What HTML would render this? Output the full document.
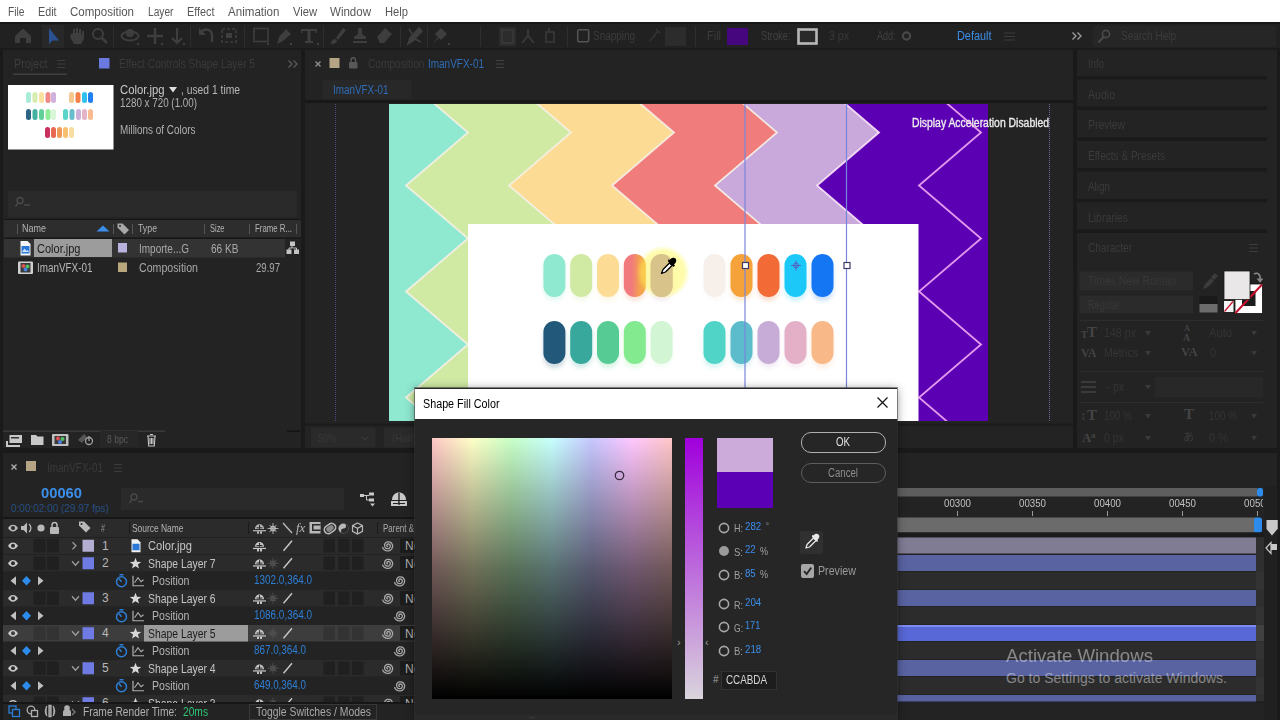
<!DOCTYPE html>
<html lang="en">
<head>
<meta charset="utf-8">
<title>Adobe After Effects - Shape Fill Color</title>
<style>
*{box-sizing:border-box;margin:0;padding:0}
html,body{width:1280px;height:720px;overflow:hidden;background:#1a1a1a}
body{position:relative;font-family:"Liberation Sans",sans-serif;font-size:12px;color:#bdbdbd}
.abs{position:absolute}
.t{position:absolute;white-space:nowrap}
svg{overflow:visible}
</style>
</head>
<body>
<div class="abs" style="left:0px;top:0px;width:1280px;height:22px;background:#ffffff;"></div>
<div class="t" style="left:7.5px;top:4.8px;font-size:12px;line-height:14px;color:#585858;transform:scaleX(0.853);transform-origin:0 50%;">File</div>
<div class="t" style="left:37.5px;top:4.8px;font-size:12px;line-height:14px;color:#585858;transform:scaleX(0.895);transform-origin:0 50%;">Edit</div>
<div class="t" style="left:70px;top:4.8px;font-size:12px;line-height:14px;color:#585858;transform:scaleX(0.960);transform-origin:0 50%;">Composition</div>
<div class="t" style="left:147.5px;top:4.8px;font-size:12px;line-height:14px;color:#585858;transform:scaleX(0.850);transform-origin:0 50%;">Layer</div>
<div class="t" style="left:187px;top:4.8px;font-size:12px;line-height:14px;color:#585858;transform:scaleX(0.903);transform-origin:0 50%;">Effect</div>
<div class="t" style="left:228px;top:4.8px;font-size:12px;line-height:14px;color:#585858;transform:scaleX(0.965);transform-origin:0 50%;">Animation</div>
<div class="t" style="left:293px;top:4.8px;font-size:12px;line-height:14px;color:#585858;transform:scaleX(0.930);transform-origin:0 50%;">View</div>
<div class="t" style="left:330px;top:4.8px;font-size:12px;line-height:14px;color:#585858;transform:scaleX(0.961);transform-origin:0 50%;">Window</div>
<div class="t" style="left:384.5px;top:4.8px;font-size:12px;line-height:14px;color:#585858;transform:scaleX(0.932);transform-origin:0 50%;">Help</div>
<div class="abs" style="left:0px;top:22px;width:1280px;height:26px;background:#212121;"></div>
<div class="abs" style="left:0px;top:22px;width:1280px;height:1.5px;background:#171717;"></div>
<div class="abs" style="left:3px;top:50px;width:298px;height:398px;background:#232323;"></div>
<div class="abs" style="left:305px;top:50px;width:768px;height:398px;background:#232323;"></div>
<div class="abs" style="left:1077px;top:50px;width:200px;height:398px;background:#232323;"></div>
<div class="abs" style="left:3px;top:453px;width:1274px;height:267px;background:#232323;"></div>
<svg class="abs" style="left:389px;top:104px;" width="599" height="317" viewBox="389 104 599 317"><defs><clipPath id="cc"><rect x="389" y="104" width="599" height="317"/></clipPath></defs><g clip-path="url(#cc)"><rect x="389" y="104" width="599" height="317" fill="#8fe8d0"/><polygon points="468,26.5 406,79.5 468,132.5 406,185.5 468,238.5 406,291.5 468,344.5 406,397.5 468,450.5 571,450.5 509,397.5 571,344.5 509,291.5 571,238.5 509,185.5 571,132.5 509,79.5 571,26.5" fill="#d0eaa4"/><polygon points="571,26.5 509,79.5 571,132.5 509,185.5 571,238.5 509,291.5 571,344.5 509,397.5 571,450.5 674,450.5 612,397.5 674,344.5 612,291.5 674,238.5 612,185.5 674,132.5 612,79.5 674,26.5" fill="#fcdc94"/><polygon points="674,26.5 612,79.5 674,132.5 612,185.5 674,238.5 612,291.5 674,344.5 612,397.5 674,450.5 777,450.5 715,397.5 777,344.5 715,291.5 777,238.5 715,185.5 777,132.5 715,79.5 777,26.5" fill="#f07c7c"/><polygon points="777,26.5 715,79.5 777,132.5 715,185.5 777,238.5 715,291.5 777,344.5 715,397.5 777,450.5 879,450.5 817,397.5 879,344.5 817,291.5 879,238.5 817,185.5 879,132.5 817,79.5 879,26.5" fill="#c9a8dc"/><polygon points="879,26.5 817,79.5 879,132.5 817,185.5 879,238.5 817,291.5 879,344.5 817,397.5 879,450.5 981,450.5 919,397.5 981,344.5 919,291.5 981,238.5 919,185.5 981,132.5 919,79.5 981,26.5" fill="#5c00b4"/><polygon points="981,26.5 919,79.5 981,132.5 919,185.5 981,238.5 919,291.5 981,344.5 919,397.5 981,450.5 1084,450.5 1022,397.5 1084,344.5 1022,291.5 1084,238.5 1022,185.5 1084,132.5 1022,79.5 1084,26.5" fill="#5c00b4"/><polyline points="468,26.5 406,79.5 468,132.5 406,185.5 468,238.5 406,291.5 468,344.5 406,397.5 468,450.5" fill="none" stroke="#f6efe6" stroke-width="1.8" stroke-opacity="0.9"/><polyline points="571,26.5 509,79.5 571,132.5 509,185.5 571,238.5 509,291.5 571,344.5 509,397.5 571,450.5" fill="none" stroke="#f6efe6" stroke-width="1.8" stroke-opacity="0.9"/><polyline points="674,26.5 612,79.5 674,132.5 612,185.5 674,238.5 612,291.5 674,344.5 612,397.5 674,450.5" fill="none" stroke="#f6efe6" stroke-width="1.8" stroke-opacity="0.9"/><polyline points="777,26.5 715,79.5 777,132.5 715,185.5 777,238.5 715,291.5 777,344.5 715,397.5 777,450.5" fill="none" stroke="#f6efe6" stroke-width="1.8" stroke-opacity="0.9"/><polyline points="879,26.5 817,79.5 879,132.5 817,185.5 879,238.5 817,291.5 879,344.5 817,397.5 879,450.5" fill="none" stroke="#fbe4f6" stroke-width="1.8" stroke-opacity="0.9"/><polyline points="981,26.5 919,79.5 981,132.5 919,185.5 981,238.5 919,291.5 981,344.5 919,397.5 981,450.5" fill="none" stroke="#f3a6f3" stroke-width="1.8" stroke-opacity="0.9"/><rect x="468" y="224" width="450.5" height="254" fill="#ffffff"/><defs><filter id="ps" x="-30%" y="-20%" width="160%" height="150%"><feGaussianBlur stdDeviation="2"/></filter><linearGradient id="p4" x1="0" x2="1" y1="0" y2="0"><stop offset="0.35" stop-color="#f07a7c"/><stop offset="0.75" stop-color="#f5a24e"/></linearGradient></defs><rect x="543.4" y="258" width="22" height="43" rx="11" fill="#8fe8d0" opacity="0.22" filter="url(#ps)"/><rect x="543.4" y="254" width="22" height="43" rx="11" fill="#8fe8d0"/><rect x="570.2" y="258" width="22" height="43" rx="11" fill="#d0eaa4" opacity="0.22" filter="url(#ps)"/><rect x="570.2" y="254" width="22" height="43" rx="11" fill="#d0eaa4"/><rect x="597.0" y="258" width="22" height="43" rx="11" fill="#fcdc94" opacity="0.22" filter="url(#ps)"/><rect x="597.0" y="254" width="22" height="43" rx="11" fill="#fcdc94"/><rect x="623.8" y="258" width="22" height="43" rx="11" fill="#f08a60" opacity="0.22" filter="url(#ps)"/><rect x="623.8" y="254" width="22" height="43" rx="11" fill="url(#p4)"/><rect x="650.6" y="258" width="22" height="43" rx="11" fill="#ccabda" opacity="0.22" filter="url(#ps)"/><rect x="650.6" y="254" width="22" height="43" rx="11" fill="#ccabda"/><rect x="703.5" y="258" width="22" height="43" rx="11" fill="#f7efea" opacity="0.22" filter="url(#ps)"/><rect x="703.5" y="254" width="22" height="43" rx="11" fill="#f7efea"/><rect x="730.5" y="258" width="22" height="43" rx="11" fill="#f5a23a" opacity="0.22" filter="url(#ps)"/><rect x="730.5" y="254" width="22" height="43" rx="11" fill="#f5a23a"/><rect x="757.5" y="258" width="22" height="43" rx="11" fill="#f26a36" opacity="0.22" filter="url(#ps)"/><rect x="757.5" y="254" width="22" height="43" rx="11" fill="#f26a36"/><rect x="784.5" y="258" width="22" height="43" rx="11" fill="#1cc8f8" opacity="0.22" filter="url(#ps)"/><rect x="784.5" y="254" width="22" height="43" rx="11" fill="#1cc8f8"/><rect x="811.5" y="258" width="22" height="43" rx="11" fill="#1476f2" opacity="0.22" filter="url(#ps)"/><rect x="811.5" y="254" width="22" height="43" rx="11" fill="#1476f2"/><rect x="543.4" y="325" width="22" height="43" rx="11" fill="#22587a" opacity="0.22" filter="url(#ps)"/><rect x="543.4" y="321" width="22" height="43" rx="11" fill="#22587a"/><rect x="570.2" y="325" width="22" height="43" rx="11" fill="#38a89c" opacity="0.22" filter="url(#ps)"/><rect x="570.2" y="321" width="22" height="43" rx="11" fill="#38a89c"/><rect x="597.0" y="325" width="22" height="43" rx="11" fill="#56cc94" opacity="0.22" filter="url(#ps)"/><rect x="597.0" y="321" width="22" height="43" rx="11" fill="#56cc94"/><rect x="623.8" y="325" width="22" height="43" rx="11" fill="#84ea90" opacity="0.22" filter="url(#ps)"/><rect x="623.8" y="321" width="22" height="43" rx="11" fill="#84ea90"/><rect x="650.6" y="325" width="22" height="43" rx="11" fill="#d2f6d4" opacity="0.22" filter="url(#ps)"/><rect x="650.6" y="321" width="22" height="43" rx="11" fill="#d2f6d4"/><rect x="703.5" y="325" width="22" height="43" rx="11" fill="#50d4c8" opacity="0.22" filter="url(#ps)"/><rect x="703.5" y="321" width="22" height="43" rx="11" fill="#50d4c8"/><rect x="730.5" y="325" width="22" height="43" rx="11" fill="#5cbccc" opacity="0.22" filter="url(#ps)"/><rect x="730.5" y="321" width="22" height="43" rx="11" fill="#5cbccc"/><rect x="757.5" y="325" width="22" height="43" rx="11" fill="#c8acd8" opacity="0.22" filter="url(#ps)"/><rect x="757.5" y="321" width="22" height="43" rx="11" fill="#c8acd8"/><rect x="784.5" y="325" width="22" height="43" rx="11" fill="#e4b0c8" opacity="0.22" filter="url(#ps)"/><rect x="784.5" y="321" width="22" height="43" rx="11" fill="#e4b0c8"/><rect x="811.5" y="325" width="22" height="43" rx="11" fill="#f8b888" opacity="0.22" filter="url(#ps)"/><rect x="811.5" y="321" width="22" height="43" rx="11" fill="#f8b888"/><defs><radialGradient id="yg"><stop offset="0" stop-color="#fff84a" stop-opacity="0.5"/><stop offset="0.78" stop-color="#fff84a" stop-opacity="0.46"/><stop offset="1" stop-color="#fff84a" stop-opacity="0"/></radialGradient></defs><circle cx="663" cy="272.5" r="27" fill="url(#yg)"/><rect x="650.6" y="254" width="22" height="43" rx="11" fill="#d8c48a"/><line x1="745" y1="104" x2="745" y2="421" stroke="#7886dc" stroke-width="1.2"/><line x1="846.5" y1="104" x2="846.5" y2="421" stroke="#7886dc" stroke-width="1.2"/><rect x="742.5" y="262.5" width="6" height="6" fill="#ffffff" stroke="#3c3c6a" stroke-width="1.2"/><rect x="844" y="262.5" width="6" height="6" fill="#ffffff" stroke="#3c3c6a" stroke-width="1.2"/><g stroke="#5560c0" stroke-width="1" fill="none"><circle cx="796" cy="265.5" r="2.5"/><path d="M796 260.5v10M791 265.5h10"/></g><g transform="translate(661,274) rotate(0)"><path d="M0.5 -0.5 L2 -4.5 L8.5 -11 L11 -8.5 L4.5 -2 Z" fill="#fff" stroke="#000" stroke-width="1.3" stroke-linejoin="round"/><path d="M7 -12.5 L12.5 -7 L14 -8.5 L13 -9.5 C16 -12 15.5 -14.5 14.5 -15.5 C13.5 -16.5 11 -17 8.5 -14 L7.5 -15 Z" fill="#000"/></g></g></svg>
<div class="t" style="left:912px;top:115.8px;font-size:12px;line-height:14px;color:#ececec;transform:scaleX(0.867);transform-origin:0 50%;-webkit-text-stroke:0.35px #ececec;">Display Acceleration Disabled</div>
<div class="abs" style="left:335px;top:104px;width:0;height:317px;border-left:1px dotted #4a4a80"></div>
<div class="abs" style="left:1049px;top:104px;width:0;height:317px;border-left:1px dotted #6a6aa0"></div>
<svg class="abs" style="left:0px;top:1.4px;" width="1280" height="50" viewBox="0 0 1280 50"><rect x="42" y="24" width="22" height="23" fill="#282828"/><path d="M15 35L23 27.5L31 35V42H26V37H20V42H15Z" fill="#3e3e3e"/><path d="M49 27V43L52.5 39.5L59 39.5Z" fill="#2a5290"/><path d="M71 33L73 32V28H75V32H76V27H78V32H79V28H81V33H82V30H84V38L81 43H74L70 36Z" fill="#3e3e3e"/><circle cx="98" cy="33" r="5" fill="none" stroke="#3e3e3e" stroke-width="2"/><path d="M102 37L107 42" stroke="#3e3e3e" stroke-width="2.5"/><ellipse cx="130" cy="35" rx="8.5" ry="4.5" fill="none" stroke="#3e3e3e" stroke-width="2"/><circle cx="130" cy="32" r="4" fill="#3e3e3e"/><rect x="137" y="42" width="2" height="2" fill="#3e3e3e"/><path d="M155 27V43M147 35H163" stroke="#3e3e3e" stroke-width="2.4"/><rect x="161" y="42" width="2" height="2" fill="#3e3e3e"/><path d="M177 27V41M172 37L177 42L182 37" stroke="#3e3e3e" stroke-width="2.2" fill="none"/><rect x="183" y="42" width="2" height="2" fill="#3e3e3e"/><path d="M200 32C204 27 212 27 212 35V41" stroke="#3e3e3e" stroke-width="2.4" fill="none"/><path d="M199 27V34H206Z" fill="#3e3e3e"/><rect x="222" y="28" width="14" height="13" fill="none" stroke="#3e3e3e" stroke-width="1.6" stroke-dasharray="3 2"/><rect x="226" y="32" width="6" height="5" fill="#3e3e3e"/><rect x="254" y="27.5" width="14" height="13" fill="none" stroke="#3e3e3e" stroke-width="1.6"/><rect x="267" y="42" width="2" height="2" fill="#3e3e3e"/><path d="M277 43L279 36L286 28L291 33L283 40Z" fill="#3e3e3e"/><rect x="290" y="42" width="2" height="2" fill="#3e3e3e"/><path d="M301 28H317V32H315.5V30H310.5V40H313V42H305V40H307.5V30H302.5V32H301Z" fill="#3e3e3e"/><rect x="317" y="42" width="2" height="2" fill="#3e3e3e"/><path d="M331 43C331 40 333 38 335 38L337 40C337 42 334 43 331 43Z M336 37L343 27L346 29L338 39Z" fill="#3e3e3e"/><path d="M358 27H362V33L366 36V38H354V36L358 33Z M353 40H367V42H353Z" fill="#3e3e3e"/><path d="M377 36L385 27L392 33L384 42H380Z" fill="#3e3e3e"/><path d="M408 43L410 37L419 27L422 30L413 40Z M409 28L412 33M415 38L421 41" stroke="#3e3e3e" stroke-width="1.6" fill="#3e3e3e"/><path d="M433 42L438 36L435 33L441 27L447 33L441 39L439 37Z" fill="#3e3e3e"/><rect x="448" y="42" width="2" height="2" fill="#3e3e3e"/><rect x="113" y="25" width="1" height="21" fill="#2e2e2e"/><rect x="190" y="25" width="1" height="21" fill="#2e2e2e"/><rect x="244" y="25" width="1" height="21" fill="#2e2e2e"/><rect x="323" y="25" width="1" height="21" fill="#2e2e2e"/><rect x="400" y="25" width="1" height="21" fill="#2e2e2e"/><rect x="427" y="25" width="1" height="21" fill="#2e2e2e"/><rect x="480" y="25" width="1" height="21" fill="#2e2e2e"/><rect x="567" y="25" width="1" height="21" fill="#2e2e2e"/><rect x="695" y="25" width="1" height="21" fill="#2e2e2e"/><rect x="499" y="26" width="17" height="19" fill="#2c2c2c"/><rect x="502" y="29" width="11" height="13" fill="none" stroke="#3a3a3a" stroke-width="1.5"/><path d="M528 28V35M522 42L528 35L534 42" stroke="#3a3a3a" stroke-width="1.8" fill="none"/><path d="M546 31H554V41H546ZM549 27V31" stroke="#3a3a3a" stroke-width="1.6" fill="none"/><rect x="577.7" y="28.7" width="11" height="12" rx="1.5" fill="none" stroke="#555" stroke-width="1.5"/><path d="M650 40L658 30M656 28L660 32" stroke="#343434" stroke-width="1.6"/><rect x="665" y="26" width="21" height="19" fill="#2c2c2c"/><rect x="727" y="27" width="21" height="17" fill="#45067e"/><rect x="798.5" y="28.5" width="18" height="14" fill="#2a2a2a" stroke="#b8b8b8" stroke-width="2.6"/><circle cx="906.5" cy="35" r="3.6" fill="none" stroke="#484848" stroke-width="2.2"/><path d="M1004 32H1015M1004 35.5H1015M1004 39H1015" stroke="#3c3c3c" stroke-width="1"/><path d="M1072.5 31.5L1076 35L1072.5 38.5M1077.5 31.5L1081 35L1077.5 38.5" stroke="#9a9a9a" stroke-width="1.4" fill="none"/><rect x="1093" y="25" width="183" height="21" rx="2" fill="#262626"/><circle cx="1106" cy="33" r="3.6" fill="none" stroke="#4a4a4a" stroke-width="1.6"/><path d="M1103.5 36L1098.5 41.5" stroke="#4a4a4a" stroke-width="2"/></svg>
<div class="t" style="left:593px;top:29.3px;font-size:12px;line-height:14px;color:#3c3c3c;transform:scaleX(0.828);transform-origin:0 50%;">Snapping</div>
<div class="t" style="left:707px;top:29.3px;font-size:12px;line-height:14px;color:#3c3c3c;transform:scaleX(0.913);transform-origin:0 50%;">Fill</div>
<div class="t" style="left:761px;top:29.3px;font-size:12px;line-height:14px;color:#424242;transform:scaleX(0.776);transform-origin:0 50%;">Stroke:</div>
<div class="t" style="left:829px;top:29.3px;font-size:12px;line-height:14px;color:#383838;transform:scaleX(0.882);transform-origin:0 50%;">3 px</div>
<div class="t" style="left:877px;top:29.3px;font-size:12px;line-height:14px;color:#404040;transform:scaleX(0.749);transform-origin:0 50%;">Add:</div>
<div class="t" style="left:957px;top:29.3px;font-size:12px;line-height:14px;color:#3b8eea;transform:scaleX(0.907);transform-origin:0 50%;">Default</div>
<div class="t" style="left:1121px;top:29.3px;font-size:12px;line-height:14px;color:#3c3c3c;transform:scaleX(0.833);transform-origin:0 50%;">Search Help</div>
<div class="t" style="left:14px;top:57.0px;font-size:12px;line-height:14px;color:#3c3c3c;transform:scaleX(0.897);transform-origin:0 50%;">Project</div>
<svg class="abs" style="left:0px;top:0px;" width="302" height="450" viewBox="0 0 302 450"><path d="M57 60.5H65M57 64H65M57 67.5H65" stroke="#3c3c3c" stroke-width="1"/><rect x="13" y="73.5" width="54" height="1.5" fill="#404040"/><rect x="99" y="58" width="10.5" height="10.5" fill="#6b7ae0"/><path d="M288.5 60.5L292 64L288.5 67.5M293.5 60.5L297 64L293.5 67.5" stroke="#5a5a5a" stroke-width="1.3" fill="none"/><rect x="8" y="85" width="105.5" height="64.5" fill="#ffffff"/><rect x="26" y="92" width="5" height="11" rx="2.5" fill="#a8ecd8"/><rect x="32.5" y="92" width="5" height="11" rx="2.5" fill="#d6ecb0"/><rect x="39" y="92" width="5" height="11" rx="2.5" fill="#fbe0a0"/><rect x="45.5" y="92" width="5" height="11" rx="2.5" fill="#f08888"/><rect x="51" y="92" width="5" height="11" rx="2.5" fill="#d0b0dc"/><rect x="69" y="92" width="5" height="11" rx="2.5" fill="#f6c890"/><rect x="75.5" y="92" width="5" height="11" rx="2.5" fill="#f28048"/><rect x="82" y="92" width="5" height="11" rx="2.5" fill="#30c0f0"/><rect x="88" y="92" width="5" height="11" rx="2.5" fill="#2080f0"/><rect x="26" y="109" width="5" height="11" rx="2.5" fill="#2c6484"/><rect x="32.5" y="109" width="5" height="11" rx="2.5" fill="#44b0a0"/><rect x="39" y="109" width="5" height="11" rx="2.5" fill="#60d098"/><rect x="45.5" y="109" width="5" height="11" rx="2.5" fill="#90ec98"/><rect x="51" y="109" width="5" height="11" rx="2.5" fill="#d8f6d8"/><rect x="63" y="109" width="5" height="11" rx="2.5" fill="#58d4c8"/><rect x="69.5" y="109" width="5" height="11" rx="2.5" fill="#68bccc"/><rect x="76" y="109" width="5" height="11" rx="2.5" fill="#ccb0d8"/><rect x="82" y="109" width="5" height="11" rx="2.5" fill="#e4b4c8"/><rect x="88" y="109" width="5" height="11" rx="2.5" fill="#f8bc90"/><rect x="45" y="127" width="5" height="11" rx="2.5" fill="#c83060"/><rect x="51" y="127" width="5" height="11" rx="2.5" fill="#e86850"/><rect x="57" y="127" width="5" height="11" rx="2.5" fill="#f09858"/><rect x="63" y="127" width="5" height="11" rx="2.5" fill="#f6c070"/><rect x="69" y="127" width="5" height="11" rx="2.5" fill="#f8dca0"/><rect x="8" y="191" width="289" height="26" fill="#2a2a2a"/><circle cx="20" cy="200.5" r="3" fill="none" stroke="#4a4a4a" stroke-width="1.4"/><path d="M18 203L15.5 206.5M24 205H30" stroke="#4a4a4a" stroke-width="1.4"/><rect x="4" y="219" width="297" height="1" fill="#151515"/><rect x="4" y="220" width="297" height="17.5" fill="#2d2d2d"/><rect x="4" y="237.5" width="297" height="1.5" fill="#181818"/><rect x="17" y="224" width="1" height="10" fill="#555"/><rect x="113" y="224" width="1" height="10" fill="#555"/><rect x="132" y="224" width="1" height="10" fill="#555"/><rect x="204" y="224" width="1" height="10" fill="#555"/><rect x="249" y="224" width="1" height="10" fill="#555"/><rect x="296" y="224" width="1" height="10" fill="#555"/><path d="M96.5 231.5L103 225.5L109.5 231.5Z" fill="#3b8eea"/><path d="M117.5 223.5H122.5L129 230L124.5 234.5L117.5 227.5Z" fill="#a8a8a8"/><circle cx="120" cy="226" r="1" fill="#2d2d2d"/><rect x="4" y="239" width="281" height="18.5" fill="#333333"/><rect x="34" y="239" width="78" height="18" fill="#9c9c9c"/><path d="M20.5 241H27.5L30.5 244V255.5H20.5Z" fill="#f4f4f4"/><rect x="21.5" y="246" width="8" height="7.5" fill="#2a78d8"/><path d="M22 252L24.5 248.5L26.5 251L27.5 250L29 252Z" fill="#cfe4ff"/><rect x="118" y="243" width="9" height="9.5" fill="#b8b2dc"/><g fill="#c4c4c4"><rect x="290" y="241.5" width="5" height="4.5"/><rect x="286.5" y="249.5" width="5" height="4.5"/><rect x="294" y="249.5" width="5" height="4.5"/><path d="M292 246V248H289V250M292.5 248H296.5V250" stroke="#c4c4c4" stroke-width="1" fill="none"/></g><rect x="18" y="261.5" width="15" height="12.5" rx="1" fill="#d0d0d0"/><rect x="20.5" y="263" width="10" height="9.5" fill="#3a3a3a"/><circle cx="23.5" cy="266" r="2" fill="#e05050"/><circle cx="27.5" cy="266.5" r="2" fill="#50c060"/><circle cx="25.5" cy="269.5" r="2" fill="#4a80e0"/><rect x="118" y="262.5" width="9" height="9.5" fill="#b8a67c"/><rect x="3" y="430.5" width="162" height="1.5" fill="#3a3a3a"/><rect x="287" y="430.5" width="13" height="1.5" fill="#141414"/><g fill="#c8c8c8"><path d="M6 441H8V445H20V447H6Z"/><rect x="9.5" y="435" width="12.5" height="8" /><rect x="11" y="437" width="8" height="1.5" fill="#333"/></g><path d="M31 435H36L37.5 436.5H43.5V445H31Z" fill="#c8c8c8"/><rect x="52" y="434" width="16.5" height="12" rx="1" fill="#c0c0c0"/><rect x="54.5" y="436" width="11.5" height="8" fill="#3a3a3a"/><circle cx="58" cy="438.5" r="2" fill="#e05050"/><circle cx="62.5" cy="439" r="2" fill="#50c060"/><circle cx="60" cy="442" r="2" fill="#4a80e0"/><path d="M78 440L84 434L87 437L82 443Z" fill="#555"/><circle cx="89" cy="441" r="3.5" fill="none" stroke="#a0a0a0" stroke-width="1.3"/><path d="M89 436V441" stroke="#a0a0a0" stroke-width="1.3"/><rect x="100" y="431" width="38" height="16" fill="#272727"/><path d="M147 436H156M148 436L148.7 446H154.3L155 436M150 434.5H153M150 438V444M151.5 438V444M153 438V444" stroke="#c4c4c4" stroke-width="1.1" fill="none"/></svg>
<div class="t" style="left:119px;top:57.0px;font-size:12px;line-height:14px;color:#3a3a3a;transform:scaleX(0.851);transform-origin:0 50%;">Effect Controls Shape Layer 5</div>
<div class="t" style="left:120px;top:82.5px;font-size:12px;line-height:14px;color:#c8c8c8;transform:scaleX(0.940);transform-origin:0 50%;">Color.jpg</div>
<svg class="abs" style="left:168px;top:86px;" width="10" height="7" viewBox="0 0 10 7"><path d="M1 1H9L5 6.5Z" fill="#e0e0e0"/></svg>
<div class="t" style="left:181px;top:82.5px;font-size:12px;line-height:14px;color:#b8b8b8;transform:scaleX(0.859);transform-origin:0 50%;">, used 1 time</div>
<div class="t" style="left:120px;top:96.0px;font-size:12px;line-height:14px;color:#b0b0b0;transform:scaleX(0.819);transform-origin:0 50%;">1280 x 720 (1.00)</div>
<div class="t" style="left:120px;top:122.5px;font-size:12px;line-height:14px;color:#b0b0b0;transform:scaleX(0.826);transform-origin:0 50%;">Millions of Colors</div>
<div class="t" style="left:22px;top:222.0px;font-size:11px;line-height:13px;color:#b4b4b4;transform:scaleX(0.818);transform-origin:0 50%;">Name</div>
<div class="t" style="left:138px;top:222.0px;font-size:11px;line-height:13px;color:#b4b4b4;transform:scaleX(0.797);transform-origin:0 50%;">Type</div>
<div class="t" style="left:210px;top:222.0px;font-size:11px;line-height:13px;color:#b4b4b4;transform:scaleX(0.678);transform-origin:0 50%;">Size</div>
<div class="t" style="left:255px;top:222.0px;font-size:11px;line-height:13px;color:#b4b4b4;transform:scaleX(0.712);transform-origin:0 50%;">Frame R...</div>
<div class="t" style="left:37px;top:241.5px;font-size:12px;line-height:14px;color:#1c1c1c;transform:scaleX(0.918);transform-origin:0 50%;">Color.jpg</div>
<div class="t" style="left:139px;top:241.5px;font-size:12px;line-height:14px;color:#a8a8a8;transform:scaleX(0.833);transform-origin:0 50%;">Importe...G</div>
<div class="t" style="left:211px;top:241.5px;font-size:12px;line-height:14px;color:#a8a8a8;transform:scaleX(0.841);transform-origin:0 50%;">66 KB</div>
<div class="t" style="left:37px;top:261.0px;font-size:12px;line-height:14px;color:#b8b8b8;transform:scaleX(0.824);transform-origin:0 50%;">ImanVFX-01</div>
<div class="t" style="left:139px;top:261.0px;font-size:12px;line-height:14px;color:#a8a8a8;transform:scaleX(0.885);transform-origin:0 50%;">Composition</div>
<div class="t" style="left:256px;top:260.5px;font-size:12px;line-height:14px;color:#a8a8a8;transform:scaleX(0.799);transform-origin:0 50%;">29.97</div>
<div class="t" style="left:107px;top:433.0px;font-size:11px;line-height:13px;color:#5a5a5a;transform:scaleX(0.780);transform-origin:0 50%;">8 bpc</div>
<svg class="abs" style="left:0px;top:0px;z-index:0" width="1280" height="450" viewBox="0 0 1280 450"><path d="M315.5 61.5L320.5 66.5M320.5 61.5L315.5 66.5" stroke="#909090" stroke-width="1.3"/><rect x="329.5" y="58" width="10" height="10" fill="#b5a584"/><rect x="349" y="62" width="8.5" height="6.5" rx="1" fill="#585858"/><path d="M351 62V60C351 57 355.5 57 355.5 60V62" fill="none" stroke="#585858" stroke-width="1.4"/><path d="M496 60.5H504M496 64H504M496 67.5H504" stroke="#444" stroke-width="1"/><rect x="322.5" y="80" width="89" height="19" fill="#282828"/><rect x="305" y="100" width="768" height="3" fill="#181818"/><rect x="305" y="423.5" width="768" height="2.5" fill="#1c1c1c"/><rect x="311" y="427.5" width="64.5" height="20" rx="1" fill="#2a2a2a"/><rect x="384" y="427.5" width="60" height="20" rx="1" fill="#2a2a2a"/><path d="M362 437L365 440L368 437" stroke="#3a3a3a" stroke-width="1.2" fill="none"/></svg>
<div class="t" style="left:367.5px;top:57.0px;font-size:12px;line-height:14px;color:#3a3a3a;transform:scaleX(0.847);transform-origin:0 50%;">Composition</div>
<div class="t" style="left:428px;top:57.0px;font-size:12px;line-height:14px;color:#2f6db8;transform:scaleX(0.831);transform-origin:0 50%;">ImanVFX-01</div>
<div class="t" style="left:332.5px;top:82.5px;font-size:12px;line-height:14px;color:#2f6db8;transform:scaleX(0.824);transform-origin:0 50%;">ImanVFX-01</div>
<div class="t" style="left:318px;top:431.5px;font-size:11px;line-height:13px;color:#383838;transform:scaleX(0.818);transform-origin:0 50%;">50%</div>
<div class="t" style="left:392px;top:431.5px;font-size:11px;line-height:13px;color:#383838;transform:scaleX(0.893);transform-origin:0 50%;">(Half)</div>
<svg class="abs" style="left:0px;top:0px;" width="1280" height="450" viewBox="0 0 1280 450"><rect x="1077" y="76" width="190" height="3.4" fill="#1a1a1a"/><rect x="1077" y="106.7" width="190" height="3.4" fill="#1a1a1a"/><rect x="1077" y="137.4" width="190" height="3.4" fill="#1a1a1a"/><rect x="1077" y="168.1" width="190" height="3.4" fill="#1a1a1a"/><rect x="1077" y="198.8" width="190" height="3.4" fill="#1a1a1a"/><rect x="1077" y="229.5" width="190" height="3.4" fill="#1a1a1a"/><path d="M1249 244.5H1258M1249 248H1258M1249 251.5H1258" stroke="#3c3c3c" stroke-width="1"/><rect x="1079.5" y="271.5" width="113.5" height="19" fill="#2b2b2b"/><rect x="1079.5" y="295.5" width="113.5" height="18" fill="#2b2b2b"/><path d="M1203 289L1205 284L1211 278L1214 281L1208 287Z M1211 277L1215 273L1218 276L1214 280Z" fill="#3c3c3c"/><rect x="1199.5" y="296" width="18" height="8" fill="#1a1a1a"/><rect x="1199.5" y="304" width="18" height="8.5" fill="#6c6c6c"/><rect x="1235" y="284" width="27.5" height="29.5" fill="#ffffff" stroke="#111" stroke-width="0.8"/><rect x="1242" y="291" width="13.5" height="15" fill="#1c1c1c"/><rect x="1244" y="293" width="18" height="20" fill="#fff" opacity="0"/><path d="M1235.5 313L1262 284.5" stroke="#c8102e" stroke-width="2"/><rect x="1224" y="271" width="26" height="28.5" fill="#e9e7e7" stroke="#1a1a1a" stroke-width="0.8"/><rect x="1224" y="301" width="9.5" height="11" fill="#f4f4f4"/><path d="M1224.5 311.5L1233 301.5" stroke="#c8102e" stroke-width="1.2"/><path d="M1254 274C1258 272 1261 275 1260 280M1257.5 278.5L1260 281.5L1262.5 278.5" stroke="#8a8a8a" stroke-width="1.5" fill="none"/><rect x="1080" y="320" width="183" height="1" fill="#2d2d2d"/><rect x="1080" y="371" width="183" height="1" fill="#2d2d2d"/><rect x="1080" y="402" width="183" height="1" fill="#2d2d2d"/><rect x="1155" y="377" width="108" height="20" fill="#282828"/><path d="M1145 331H1151L1148 335.5Z M1251 331H1257L1254 335.5Z" fill="#3a3a3a"/><path d="M1145 351H1151L1148 355.5Z M1251 351H1257L1254 355.5Z" fill="#3a3a3a"/><path d="M1145 414H1151L1148 418.5Z M1251 414H1257L1254 418.5Z" fill="#3a3a3a"/><path d="M1145 436H1151L1148 440.5Z M1251 436H1257L1254 440.5Z" fill="#3a3a3a"/><path d="M1081 382H1096M1081 387H1096M1081 392H1096" stroke="#3a3a3a" stroke-width="2"/><path d="M1145 385H1151L1148 389.5Z" fill="#3a3a3a"/></svg>
<div class="t" style="left:1088px;top:57.0px;font-size:12px;line-height:14px;color:#3a3a3a;transform:scaleX(0.799);transform-origin:0 50%;">Info</div>
<div class="t" style="left:1088px;top:87.5px;font-size:12px;line-height:14px;color:#3a3a3a;transform:scaleX(0.880);transform-origin:0 50%;">Audio</div>
<div class="t" style="left:1088px;top:118.0px;font-size:12px;line-height:14px;color:#3a3a3a;transform:scaleX(0.867);transform-origin:0 50%;">Preview</div>
<div class="t" style="left:1088px;top:149.0px;font-size:12px;line-height:14px;color:#3a3a3a;transform:scaleX(0.839);transform-origin:0 50%;">Effects &amp; Presets</div>
<div class="t" style="left:1088px;top:180.0px;font-size:12px;line-height:14px;color:#3a3a3a;transform:scaleX(0.824);transform-origin:0 50%;">Align</div>
<div class="t" style="left:1088px;top:210.5px;font-size:12px;line-height:14px;color:#3a3a3a;transform:scaleX(0.869);transform-origin:0 50%;">Libraries</div>
<div class="t" style="left:1088px;top:241.0px;font-size:12px;line-height:14px;color:#3a3a3a;transform:scaleX(0.835);transform-origin:0 50%;">Character</div>
<div class="t" style="left:1088px;top:274.0px;font-size:12px;line-height:14px;color:#383838;transform:scaleX(0.866);transform-origin:0 50%;">Times New Roman</div>
<div class="t" style="left:1088px;top:298.0px;font-size:12px;line-height:14px;color:#383838;transform:scaleX(0.761);transform-origin:0 50%;">Regular</div>
<div class="t" style="left:1104px;top:326.0px;font-size:12px;line-height:14px;color:#353535;transform:scaleX(0.888);transform-origin:0 50%;">148 px</div>
<div class="t" style="left:1209px;top:326.0px;font-size:12px;line-height:14px;color:#353535;transform:scaleX(0.932);transform-origin:0 50%;">Auto</div>
<div class="t" style="left:1104px;top:346.0px;font-size:12px;line-height:14px;color:#353535;transform:scaleX(0.879);transform-origin:0 50%;">Metrics</div>
<div class="t" style="left:1210px;top:346.0px;font-size:12px;line-height:14px;color:#353535;transform:scaleX(0.899);transform-origin:0 50%;">0</div>
<div class="t" style="left:1107px;top:380.0px;font-size:12px;line-height:14px;color:#353535;transform:scaleX(0.850);transform-origin:0 50%;">- px</div>
<div class="t" style="left:1104px;top:409.0px;font-size:12px;line-height:14px;color:#353535;transform:scaleX(0.823);transform-origin:0 50%;">100 %</div>
<div class="t" style="left:1209px;top:409.0px;font-size:12px;line-height:14px;color:#353535;transform:scaleX(0.823);transform-origin:0 50%;">100 %</div>
<div class="t" style="left:1104px;top:431.0px;font-size:12px;line-height:14px;color:#353535;transform:scaleX(0.882);transform-origin:0 50%;">0 px</div>
<div class="t" style="left:1209px;top:431.0px;font-size:12px;line-height:14px;color:#353535;transform:scaleX(0.919);transform-origin:0 50%;">0 %</div>
<div class="t" style="left:1081px;top:329.0px;font-size:10px;line-height:12px;color:#444;font-family:'Liberation Serif',serif;font-weight:bold;">T</div>
<div class="t" style="left:1087px;top:324.0px;font-size:15px;line-height:17px;color:#444;font-family:'Liberation Serif',serif;font-weight:bold;">T</div>
<div class="t" style="left:1184px;top:324.0px;font-size:8px;line-height:10px;color:#444;font-family:'Liberation Serif',serif;font-weight:bold;">A</div>
<div class="t" style="left:1183px;top:331.5px;font-size:10px;line-height:12px;color:#444;font-family:'Liberation Serif',serif;font-weight:bold;">A</div>
<div class="t" style="left:1081px;top:345.5px;font-size:12px;line-height:14px;color:#444;transform:scaleX(0.992);transform-origin:0 50%;font-family:'Liberation Serif',serif;font-weight:bold;">VA</div>
<div class="t" style="left:1181px;top:345.0px;font-size:12px;line-height:14px;color:#444;transform:scaleX(1.058);transform-origin:0 50%;font-family:'Liberation Serif',serif;font-weight:bold;">VA</div>
<div class="t" style="left:1087px;top:407.0px;font-size:15px;line-height:17px;color:#444;font-family:'Liberation Serif',serif;font-weight:bold;">T</div>
<div class="t" style="left:1080px;top:409.0px;font-size:12px;line-height:14px;color:#444;">↕</div>
<div class="t" style="left:1184px;top:406.0px;font-size:15px;line-height:17px;color:#444;font-family:'Liberation Serif',serif;font-weight:bold;">T</div>
<div class="t" style="left:1082px;top:430.0px;font-size:13px;line-height:15px;color:#444;font-family:'Liberation Serif',serif;font-weight:bold;">A</div>
<div class="t" style="left:1091px;top:429.5px;font-size:9px;line-height:11px;color:#444;font-family:'Liberation Serif',serif;font-weight:bold;">a</div>
<div class="t" style="left:1183px;top:431.0px;font-size:11px;line-height:13px;color:#3c3c3c;font-family:'Liberation Sans','Noto Sans CJK JP',sans-serif;">あ</div>
<svg class="abs" style="left:0px;top:440px;" width="420" height="280" viewBox="0 440 420 280"><path d="M11.5 464.5L16.5 469.5M16.5 464.5L11.5 469.5" stroke="#b0b0b0" stroke-width="1.3"/><rect x="26" y="461" width="10" height="10" fill="#b5a584"/><path d="M114 464.5H122M114 468H122M114 471.5H122" stroke="#3c3c3c" stroke-width="1"/><rect x="121" y="488" width="223" height="22" fill="#2a2a2a"/><circle cx="134" cy="497" r="3" fill="none" stroke="#484848" stroke-width="1.4"/><path d="M132 499.5L129.5 503M138 501.5H143" stroke="#484848" stroke-width="1.4"/><g fill="#c8c8c8"><rect x="360" y="494" width="4" height="3"/><rect x="369" y="492.5" width="5" height="3"/><rect x="369" y="498.5" width="5" height="3"/><path d="M364 495.5H369M366.5 495.5V500H369" stroke="#c8c8c8" stroke-width="1" fill="none"/><path d="M370 503.5H375L372.5 506.5Z"/></g><g fill="#c8c8c8"><path d="M392 500C392 490 406 490 406 500Z"/><rect x="391" y="501" width="16" height="5" /><rect x="398.3" y="493" width="1.4" height="12" fill="#232323"/><rect x="393" y="503" width="12" height="1" fill="#232323"/></g><rect x="3" y="517" width="412" height="2" fill="#161616"/><rect x="3" y="519" width="412" height="18.5" fill="#2b2b2b"/><rect x="3" y="537" width="412" height="1.2" fill="#161616"/><path d="M8 528C10.5 523.5 15.5 523.5 18 528C15.5 532.5 10.5 532.5 8 528Z" fill="#b8b8b8"/><circle cx="13" cy="528" r="2" fill="#2b2b2b"/><path d="M21 526H23.5L27 522.5V533.5L23.5 530H21Z" fill="#b8b8b8"/><path d="M29 524C31.5 526 31.5 530 29 532" stroke="#b8b8b8" stroke-width="1.3" fill="none"/><circle cx="41" cy="528" r="3.6" fill="#b8b8b8"/><rect x="50" y="527" width="9" height="7" rx="1" fill="#b8b8b8"/><path d="M52 527V525C52 521.5 57 521.5 57 525V527" fill="none" stroke="#b8b8b8" stroke-width="1.5"/><path d="M79 521.5H84L90.5 528L86 532.5L79 525.5Z" fill="#b8b8b8"/><circle cx="81.5" cy="524" r="1" fill="#2b2b2b"/><rect x="129" y="522" width="1" height="12" fill="#1a1a1a"/><rect x="248" y="522" width="1" height="12" fill="#1a1a1a"/><rect x="377" y="522" width="1" height="12" fill="#1a1a1a"/><path d="M255 529.0C255 522.5 264 522.5 264 529.0Z" fill="#b8b8b8"/><rect x="253" y="530.1" width="13" height="1.2" fill="#b8b8b8"/><rect x="259" y="525.0" width="1.1" height="4" fill="#2b2b2b"/><rect x="256.5" y="527.3" width="6" height="1" fill="#2b2b2b"/><rect x="257" y="531.3" width="2" height="2.4" fill="#b8b8b8"/><rect x="260" y="531.3" width="2" height="2.4" fill="#b8b8b8"/><circle cx="273" cy="528.5" r="2.2" fill="none" stroke="#b8b8b8" stroke-width="1.3"/><path d="M273 523.0V534.0M267.5 528.5H278.5M269.5 525.0L276.5 532.0M269.5 532.0L276.5 525.0" stroke="#b8b8b8" stroke-width="0.9"/><path d="M283 523L292 533" stroke="#b8b8b8" stroke-width="1.4"/><rect x="309.5" y="522" width="11" height="11.5" fill="#b8b8b8"/><rect x="312" y="524" width="8.5" height="7" fill="#2b2b2b"/><rect x="313.5" y="525.5" width="7" height="4" fill="#b8b8b8"/><rect x="324" y="524.5" width="12" height="8" rx="4" transform="rotate(-35 330 528.5)" fill="none" stroke="#b8b8b8" stroke-width="1.6"/><rect x="326" y="526" width="8" height="5" rx="2.5" transform="rotate(-35 330 528.5)" fill="#8a8a8a"/><circle cx="343.5" cy="528.5" r="5" fill="#b8b8b8"/><path d="M343.5 523.5A5 5 0 0 1 343.5 533.5A2.5 2.5 0 0 1 343.5 528.5A2.5 2.5 0 0 0 343.5 523.5Z" fill="#2b2b2b"/><path d="M357.5 523L362.5 525.7V531.3L357.5 534L352.5 531.3V525.7ZM352.5 525.7L357.5 528.4L362.5 525.7M357.5 528.4V534" stroke="#b8b8b8" stroke-width="1.2" fill="none"/><rect x="3" y="537.5" width="412" height="16.5" fill="#2b2b2b"/><path d="M8 545.75C10.5 541.25 15.5 541.25 18 545.75C15.5 550.25 10.5 550.25 8 545.75Z" fill="#c8c8c8"/><circle cx="13" cy="545.75" r="2" fill="#2b2b2b"/><rect x="33.5" y="539.0" width="12" height="13.5" fill="#202020"/><rect x="47" y="539.0" width="12" height="13.5" fill="#202020"/><path d="M72.5 542.25L76 545.75L72.5 549.25" stroke="#a0a0a0" stroke-width="1.2" fill="none"/><rect x="82.5" y="539.75" width="11.5" height="12" fill="#b4aed2"/><path d="M131.5 539.25H137.5L140.5 542.25V552.25H131.5Z" fill="#f0f0f0"/><rect x="132.5" y="543.75" width="7" height="6.5" fill="#2a78d8"/><path d="M255 546.75C255 540.25 264 540.25 264 546.75Z" fill="#c8c8c8"/><rect x="253" y="547.85" width="13" height="1.2" fill="#c8c8c8"/><rect x="259" y="542.75" width="1.1" height="4" fill="#2b2b2b"/><rect x="256.5" y="545.05" width="6" height="1" fill="#2b2b2b"/><rect x="257" y="549.05" width="2" height="2.4" fill="#c8c8c8"/><rect x="260" y="549.05" width="2" height="2.4" fill="#c8c8c8"/><path d="M283.5 550.75L292 540.75" stroke="#c8c8c8" stroke-width="1.4"/><rect x="323.5" y="539.0" width="11.5" height="13.5" fill="#202020"/><rect x="338" y="539.0" width="11.5" height="13.5" fill="#202020"/><rect x="352" y="539.0" width="11.5" height="13.5" fill="#202020"/><polyline points="387.5,546.4 387.3,546.3 387.2,546.2 387.0,546.0 386.9,545.8 386.8,545.6 386.8,545.3 386.9,545.0 387.0,544.7 387.2,544.4 387.5,544.2 387.8,544.1 388.2,544.0 388.6,544.0 389.0,544.1 389.4,544.3 389.8,544.6 390.0,545.0 390.2,545.5 390.3,546.0 390.3,546.5 390.1,547.0 389.9,547.5 389.5,547.9 389.0,548.3 388.4,548.5 387.8,548.6 387.2,548.6 386.5,548.4 385.9,548.1 385.4,547.6 385.0,547.0 384.7,546.4 384.6,545.6 384.6,544.9 384.8,544.1 385.2,543.4 385.7,542.8 386.4,542.3 387.1,541.9 388.0,541.8 388.9,541.8 389.8,542.0 390.6,542.4 391.3,543.0 391.9,543.8 392.3,544.6 392.6,545.6 392.6,546.6 392.3,547.6 391.9,548.6 391.2,549.4 390.4,550.1 389.4,550.6 388.3,550.9 387.2,550.9 386.1,550.7 385.0,550.2 384.0,549.5 383.2,548.6 382.7,547.5" fill="none" stroke="#a8a8a8" stroke-width="1.3" stroke-linecap="round"/><rect x="400" y="538.5" width="15" height="14.5" fill="#1c1c1c"/><rect x="3" y="555.0" width="412" height="16.5" fill="#2b2b2b"/><path d="M8 563.25C10.5 558.75 15.5 558.75 18 563.25C15.5 567.75 10.5 567.75 8 563.25Z" fill="#c8c8c8"/><circle cx="13" cy="563.25" r="2" fill="#2b2b2b"/><rect x="33.5" y="556.5" width="12" height="13.5" fill="#202020"/><rect x="47" y="556.5" width="12" height="13.5" fill="#202020"/><path d="M72 561.25L75.5 565.25L79 561.25" stroke="#a0a0a0" stroke-width="1.2" fill="none"/><rect x="82.5" y="557.25" width="11.5" height="12" fill="#6f7be2"/><polygon points="135.5,557.8 137.0,561.7 141.2,561.9 137.9,564.5 139.0,568.6 135.5,566.2 132.0,568.6 133.1,564.5 129.8,561.9 134.0,561.7" fill="#d8d8d8"/><path d="M255 564.25C255 557.75 264 557.75 264 564.25Z" fill="#c8c8c8"/><rect x="253" y="565.35" width="13" height="1.2" fill="#c8c8c8"/><rect x="259" y="560.25" width="1.1" height="4" fill="#2b2b2b"/><rect x="256.5" y="562.55" width="6" height="1" fill="#2b2b2b"/><rect x="257" y="566.55" width="2" height="2.4" fill="#c8c8c8"/><rect x="260" y="566.55" width="2" height="2.4" fill="#c8c8c8"/><circle cx="273" cy="563.25" r="2.2" fill="none" stroke="#505050" stroke-width="1.3"/><path d="M273 557.75V568.75M267.5 563.25H278.5M269.5 559.75L276.5 566.75M269.5 566.75L276.5 559.75" stroke="#505050" stroke-width="0.9"/><path d="M283.5 568.25L292 558.25" stroke="#c8c8c8" stroke-width="1.4"/><rect x="323.5" y="556.5" width="11.5" height="13.5" fill="#202020"/><rect x="338" y="556.5" width="11.5" height="13.5" fill="#202020"/><rect x="352" y="556.5" width="11.5" height="13.5" fill="#202020"/><polyline points="387.5,563.9 387.3,563.8 387.2,563.7 387.0,563.5 386.9,563.3 386.8,563.1 386.8,562.8 386.9,562.5 387.0,562.2 387.2,561.9 387.5,561.7 387.8,561.6 388.2,561.5 388.6,561.5 389.0,561.6 389.4,561.8 389.8,562.1 390.0,562.5 390.2,563.0 390.3,563.5 390.3,564.0 390.1,564.5 389.9,565.0 389.5,565.4 389.0,565.8 388.4,566.0 387.8,566.1 387.2,566.1 386.5,565.9 385.9,565.6 385.4,565.1 385.0,564.5 384.7,563.9 384.6,563.1 384.6,562.4 384.8,561.6 385.2,560.9 385.7,560.3 386.4,559.8 387.1,559.4 388.0,559.3 388.9,559.3 389.8,559.5 390.6,559.9 391.3,560.5 391.9,561.3 392.3,562.1 392.6,563.1 392.6,564.1 392.3,565.1 391.9,566.1 391.2,566.9 390.4,567.6 389.4,568.1 388.3,568.4 387.2,568.4 386.1,568.2 385.0,567.7 384.0,567.0 383.2,566.1 382.7,565.0" fill="none" stroke="#a8a8a8" stroke-width="1.3" stroke-linecap="round"/><rect x="400" y="556.0" width="15" height="14.5" fill="#1c1c1c"/><rect x="3" y="590.0" width="412" height="16.5" fill="#2b2b2b"/><path d="M8 598.25C10.5 593.75 15.5 593.75 18 598.25C15.5 602.75 10.5 602.75 8 598.25Z" fill="#c8c8c8"/><circle cx="13" cy="598.25" r="2" fill="#2b2b2b"/><rect x="33.5" y="591.5" width="12" height="13.5" fill="#202020"/><rect x="47" y="591.5" width="12" height="13.5" fill="#202020"/><path d="M72 596.25L75.5 600.25L79 596.25" stroke="#a0a0a0" stroke-width="1.2" fill="none"/><rect x="82.5" y="592.25" width="11.5" height="12" fill="#6f7be2"/><polygon points="135.5,592.8 137.0,596.7 141.2,596.9 137.9,599.5 139.0,603.6 135.5,601.2 132.0,603.6 133.1,599.5 129.8,596.9 134.0,596.7" fill="#d8d8d8"/><path d="M255 599.25C255 592.75 264 592.75 264 599.25Z" fill="#c8c8c8"/><rect x="253" y="600.35" width="13" height="1.2" fill="#c8c8c8"/><rect x="259" y="595.25" width="1.1" height="4" fill="#2b2b2b"/><rect x="256.5" y="597.55" width="6" height="1" fill="#2b2b2b"/><rect x="257" y="601.55" width="2" height="2.4" fill="#c8c8c8"/><rect x="260" y="601.55" width="2" height="2.4" fill="#c8c8c8"/><circle cx="273" cy="598.25" r="2.2" fill="none" stroke="#505050" stroke-width="1.3"/><path d="M273 592.75V603.75M267.5 598.25H278.5M269.5 594.75L276.5 601.75M269.5 601.75L276.5 594.75" stroke="#505050" stroke-width="0.9"/><path d="M283.5 603.25L292 593.25" stroke="#c8c8c8" stroke-width="1.4"/><rect x="323.5" y="591.5" width="11.5" height="13.5" fill="#202020"/><rect x="338" y="591.5" width="11.5" height="13.5" fill="#202020"/><rect x="352" y="591.5" width="11.5" height="13.5" fill="#202020"/><polyline points="387.5,598.9 387.3,598.8 387.2,598.7 387.0,598.5 386.9,598.3 386.8,598.1 386.8,597.8 386.9,597.5 387.0,597.2 387.2,596.9 387.5,596.7 387.8,596.6 388.2,596.5 388.6,596.5 389.0,596.6 389.4,596.8 389.8,597.1 390.0,597.5 390.2,598.0 390.3,598.5 390.3,599.0 390.1,599.5 389.9,600.0 389.5,600.4 389.0,600.8 388.4,601.0 387.8,601.1 387.2,601.1 386.5,600.9 385.9,600.6 385.4,600.1 385.0,599.5 384.7,598.9 384.6,598.1 384.6,597.4 384.8,596.6 385.2,595.9 385.7,595.3 386.4,594.8 387.1,594.4 388.0,594.3 388.9,594.3 389.8,594.5 390.6,594.9 391.3,595.5 391.9,596.3 392.3,597.1 392.6,598.1 392.6,599.1 392.3,600.1 391.9,601.1 391.2,601.9 390.4,602.6 389.4,603.1 388.3,603.4 387.2,603.4 386.1,603.2 385.0,602.7 384.0,602.0 383.2,601.1 382.7,600.0" fill="none" stroke="#a8a8a8" stroke-width="1.3" stroke-linecap="round"/><rect x="400" y="591.0" width="15" height="14.5" fill="#1c1c1c"/><rect x="3" y="625.0" width="412" height="16.5" fill="#3d3d3d"/><path d="M8 633.25C10.5 628.75 15.5 628.75 18 633.25C15.5 637.75 10.5 637.75 8 633.25Z" fill="#c8c8c8"/><circle cx="13" cy="633.25" r="2" fill="#3d3d3d"/><rect x="33.5" y="626.5" width="12" height="13.5" fill="#333333"/><rect x="47" y="626.5" width="12" height="13.5" fill="#333333"/><path d="M72 631.25L75.5 635.25L79 631.25" stroke="#a0a0a0" stroke-width="1.2" fill="none"/><rect x="82.5" y="627.25" width="11.5" height="12" fill="#6f7be2"/><polygon points="135.5,627.8 137.0,631.7 141.2,631.9 137.9,634.5 139.0,638.6 135.5,636.2 132.0,638.6 133.1,634.5 129.8,631.9 134.0,631.7" fill="#d8d8d8"/><rect x="144" y="625.0" width="104" height="16.5" fill="#9c9c9c"/><path d="M255 634.25C255 627.75 264 627.75 264 634.25Z" fill="#c8c8c8"/><rect x="253" y="635.35" width="13" height="1.2" fill="#c8c8c8"/><rect x="259" y="630.25" width="1.1" height="4" fill="#3d3d3d"/><rect x="256.5" y="632.55" width="6" height="1" fill="#3d3d3d"/><rect x="257" y="636.55" width="2" height="2.4" fill="#c8c8c8"/><rect x="260" y="636.55" width="2" height="2.4" fill="#c8c8c8"/><circle cx="273" cy="633.25" r="2.2" fill="none" stroke="#505050" stroke-width="1.3"/><path d="M273 627.75V638.75M267.5 633.25H278.5M269.5 629.75L276.5 636.75M269.5 636.75L276.5 629.75" stroke="#505050" stroke-width="0.9"/><path d="M283.5 638.25L292 628.25" stroke="#c8c8c8" stroke-width="1.4"/><rect x="323.5" y="626.5" width="11.5" height="13.5" fill="#333333"/><rect x="338" y="626.5" width="11.5" height="13.5" fill="#333333"/><rect x="352" y="626.5" width="11.5" height="13.5" fill="#333333"/><polyline points="387.5,633.9 387.3,633.8 387.2,633.7 387.0,633.5 386.9,633.3 386.8,633.1 386.8,632.8 386.9,632.5 387.0,632.2 387.2,631.9 387.5,631.7 387.8,631.6 388.2,631.5 388.6,631.5 389.0,631.6 389.4,631.8 389.8,632.1 390.0,632.5 390.2,633.0 390.3,633.5 390.3,634.0 390.1,634.5 389.9,635.0 389.5,635.4 389.0,635.8 388.4,636.0 387.8,636.1 387.2,636.1 386.5,635.9 385.9,635.6 385.4,635.1 385.0,634.5 384.7,633.9 384.6,633.1 384.6,632.4 384.8,631.6 385.2,630.9 385.7,630.3 386.4,629.8 387.1,629.4 388.0,629.3 388.9,629.3 389.8,629.5 390.6,629.9 391.3,630.5 391.9,631.3 392.3,632.1 392.6,633.1 392.6,634.1 392.3,635.1 391.9,636.1 391.2,636.9 390.4,637.6 389.4,638.1 388.3,638.4 387.2,638.4 386.1,638.2 385.0,637.7 384.0,637.0 383.2,636.1 382.7,635.0" fill="none" stroke="#a8a8a8" stroke-width="1.3" stroke-linecap="round"/><rect x="400" y="626.0" width="15" height="14.5" fill="#1c1c1c"/><rect x="3" y="660.0" width="412" height="16.5" fill="#2b2b2b"/><path d="M8 668.25C10.5 663.75 15.5 663.75 18 668.25C15.5 672.75 10.5 672.75 8 668.25Z" fill="#c8c8c8"/><circle cx="13" cy="668.25" r="2" fill="#2b2b2b"/><rect x="33.5" y="661.5" width="12" height="13.5" fill="#202020"/><rect x="47" y="661.5" width="12" height="13.5" fill="#202020"/><path d="M72 666.25L75.5 670.25L79 666.25" stroke="#a0a0a0" stroke-width="1.2" fill="none"/><rect x="82.5" y="662.25" width="11.5" height="12" fill="#6f7be2"/><polygon points="135.5,662.8 137.0,666.7 141.2,666.9 137.9,669.5 139.0,673.6 135.5,671.2 132.0,673.6 133.1,669.5 129.8,666.9 134.0,666.7" fill="#d8d8d8"/><path d="M255 669.25C255 662.75 264 662.75 264 669.25Z" fill="#c8c8c8"/><rect x="253" y="670.35" width="13" height="1.2" fill="#c8c8c8"/><rect x="259" y="665.25" width="1.1" height="4" fill="#2b2b2b"/><rect x="256.5" y="667.55" width="6" height="1" fill="#2b2b2b"/><rect x="257" y="671.55" width="2" height="2.4" fill="#c8c8c8"/><rect x="260" y="671.55" width="2" height="2.4" fill="#c8c8c8"/><circle cx="273" cy="668.25" r="2.2" fill="none" stroke="#505050" stroke-width="1.3"/><path d="M273 662.75V673.75M267.5 668.25H278.5M269.5 664.75L276.5 671.75M269.5 671.75L276.5 664.75" stroke="#505050" stroke-width="0.9"/><path d="M283.5 673.25L292 663.25" stroke="#c8c8c8" stroke-width="1.4"/><rect x="323.5" y="661.5" width="11.5" height="13.5" fill="#202020"/><rect x="338" y="661.5" width="11.5" height="13.5" fill="#202020"/><rect x="352" y="661.5" width="11.5" height="13.5" fill="#202020"/><polyline points="387.5,668.9 387.3,668.8 387.2,668.7 387.0,668.5 386.9,668.3 386.8,668.1 386.8,667.8 386.9,667.5 387.0,667.2 387.2,666.9 387.5,666.7 387.8,666.6 388.2,666.5 388.6,666.5 389.0,666.6 389.4,666.8 389.8,667.1 390.0,667.5 390.2,668.0 390.3,668.5 390.3,669.0 390.1,669.5 389.9,670.0 389.5,670.4 389.0,670.8 388.4,671.0 387.8,671.1 387.2,671.1 386.5,670.9 385.9,670.6 385.4,670.1 385.0,669.5 384.7,668.9 384.6,668.1 384.6,667.4 384.8,666.6 385.2,665.9 385.7,665.3 386.4,664.8 387.1,664.4 388.0,664.3 388.9,664.3 389.8,664.5 390.6,664.9 391.3,665.5 391.9,666.3 392.3,667.1 392.6,668.1 392.6,669.1 392.3,670.1 391.9,671.1 391.2,671.9 390.4,672.6 389.4,673.1 388.3,673.4 387.2,673.4 386.1,673.2 385.0,672.7 384.0,672.0 383.2,671.1 382.7,670.0" fill="none" stroke="#a8a8a8" stroke-width="1.3" stroke-linecap="round"/><rect x="400" y="661.0" width="15" height="14.5" fill="#1c1c1c"/><rect x="3" y="695.0" width="412" height="16.5" fill="#2b2b2b"/><path d="M8 703.25C10.5 698.75 15.5 698.75 18 703.25C15.5 707.75 10.5 707.75 8 703.25Z" fill="#c8c8c8"/><circle cx="13" cy="703.25" r="2" fill="#2b2b2b"/><rect x="33.5" y="696.5" width="12" height="13.5" fill="#202020"/><rect x="47" y="696.5" width="12" height="13.5" fill="#202020"/><path d="M72 701.25L75.5 705.25L79 701.25" stroke="#a0a0a0" stroke-width="1.2" fill="none"/><rect x="82.5" y="697.25" width="11.5" height="12" fill="#6f7be2"/><polygon points="135.5,697.8 137.0,701.7 141.2,701.9 137.9,704.5 139.0,708.6 135.5,706.2 132.0,708.6 133.1,704.5 129.8,701.9 134.0,701.7" fill="#d8d8d8"/><path d="M255 704.25C255 697.75 264 697.75 264 704.25Z" fill="#c8c8c8"/><rect x="253" y="705.35" width="13" height="1.2" fill="#c8c8c8"/><rect x="259" y="700.25" width="1.1" height="4" fill="#2b2b2b"/><rect x="256.5" y="702.55" width="6" height="1" fill="#2b2b2b"/><rect x="257" y="706.55" width="2" height="2.4" fill="#c8c8c8"/><rect x="260" y="706.55" width="2" height="2.4" fill="#c8c8c8"/><circle cx="273" cy="703.25" r="2.2" fill="none" stroke="#505050" stroke-width="1.3"/><path d="M273 697.75V708.75M267.5 703.25H278.5M269.5 699.75L276.5 706.75M269.5 706.75L276.5 699.75" stroke="#505050" stroke-width="0.9"/><path d="M283.5 708.25L292 698.25" stroke="#c8c8c8" stroke-width="1.4"/><rect x="323.5" y="696.5" width="11.5" height="13.5" fill="#202020"/><rect x="338" y="696.5" width="11.5" height="13.5" fill="#202020"/><rect x="352" y="696.5" width="11.5" height="13.5" fill="#202020"/><polyline points="387.5,703.9 387.3,703.8 387.2,703.7 387.0,703.5 386.9,703.3 386.8,703.1 386.8,702.8 386.9,702.5 387.0,702.2 387.2,701.9 387.5,701.7 387.8,701.6 388.2,701.5 388.6,701.5 389.0,701.6 389.4,701.8 389.8,702.1 390.0,702.5 390.2,703.0 390.3,703.5 390.3,704.0 390.1,704.5 389.9,705.0 389.5,705.4 389.0,705.8 388.4,706.0 387.8,706.1 387.2,706.1 386.5,705.9 385.9,705.6 385.4,705.1 385.0,704.5 384.7,703.9 384.6,703.1 384.6,702.4 384.8,701.6 385.2,700.9 385.7,700.3 386.4,699.8 387.1,699.4 388.0,699.3 388.9,699.3 389.8,699.5 390.6,699.9 391.3,700.5 391.9,701.3 392.3,702.1 392.6,703.1 392.6,704.1 392.3,705.1 391.9,706.1 391.2,706.9 390.4,707.6 389.4,708.1 388.3,708.4 387.2,708.4 386.1,708.2 385.0,707.7 384.0,707.0 383.2,706.1 382.7,705.0" fill="none" stroke="#a8a8a8" stroke-width="1.3" stroke-linecap="round"/><rect x="400" y="696.0" width="15" height="14.5" fill="#1c1c1c"/><path d="M16 576.25V585.25L10.5 580.75Z" fill="#c0c0c0"/><path d="M26.5 575.95L31 580.75L26.5 585.55L22 580.75Z" fill="#2d8ceb"/><path d="M38 576.25V585.25L43.5 580.75Z" fill="#c0c0c0"/><circle cx="121.5" cy="581.75" r="5" fill="none" stroke="#2d7fd6" stroke-width="1.5"/><path d="M119.5 574.75H123.5M121.5 581.75L119 578.75" stroke="#2d7fd6" stroke-width="1.5"/><path d="M133 575.75V585.75H144" stroke="#b0b0b0" stroke-width="1.2" fill="none"/><path d="M134.5 582.75L138 577.75L141 581.75L143.5 579.75" stroke="#b0b0b0" stroke-width="1.1" fill="none"/><polyline points="399.5,581.4 399.3,581.3 399.2,581.2 399.0,581.0 398.9,580.8 398.8,580.6 398.8,580.3 398.9,580.0 399.0,579.7 399.2,579.4 399.5,579.2 399.8,579.1 400.2,579.0 400.6,579.0 401.0,579.1 401.4,579.3 401.8,579.6 402.0,580.0 402.2,580.5 402.3,581.0 402.3,581.5 402.1,582.0 401.9,582.5 401.5,582.9 401.0,583.3 400.4,583.5 399.8,583.6 399.2,583.6 398.5,583.4 397.9,583.1 397.4,582.6 397.0,582.0 396.7,581.4 396.6,580.6 396.6,579.9 396.8,579.1 397.2,578.4 397.7,577.8 398.4,577.3 399.1,576.9 400.0,576.8 400.9,576.8 401.8,577.0 402.6,577.4 403.3,578.0 403.9,578.8 404.3,579.6 404.6,580.6 404.6,581.6 404.3,582.6 403.9,583.6 403.2,584.4 402.4,585.1 401.4,585.6 400.3,585.9 399.2,585.9 398.1,585.7 397.0,585.2 396.0,584.5 395.2,583.6 394.7,582.5" fill="none" stroke="#a8a8a8" stroke-width="1.3" stroke-linecap="round"/><path d="M16 611.25V620.25L10.5 615.75Z" fill="#c0c0c0"/><path d="M26.5 610.95L31 615.75L26.5 620.55L22 615.75Z" fill="#2d8ceb"/><path d="M38 611.25V620.25L43.5 615.75Z" fill="#c0c0c0"/><circle cx="121.5" cy="616.75" r="5" fill="none" stroke="#2d7fd6" stroke-width="1.5"/><path d="M119.5 609.75H123.5M121.5 616.75L119 613.75" stroke="#2d7fd6" stroke-width="1.5"/><path d="M133 610.75V620.75H144" stroke="#b0b0b0" stroke-width="1.2" fill="none"/><path d="M134.5 617.75L138 612.75L141 616.75L143.5 614.75" stroke="#b0b0b0" stroke-width="1.1" fill="none"/><polyline points="399.5,616.4 399.3,616.3 399.2,616.2 399.0,616.0 398.9,615.8 398.8,615.6 398.8,615.3 398.9,615.0 399.0,614.7 399.2,614.4 399.5,614.2 399.8,614.1 400.2,614.0 400.6,614.0 401.0,614.1 401.4,614.3 401.8,614.6 402.0,615.0 402.2,615.5 402.3,616.0 402.3,616.5 402.1,617.0 401.9,617.5 401.5,617.9 401.0,618.3 400.4,618.5 399.8,618.6 399.2,618.6 398.5,618.4 397.9,618.1 397.4,617.6 397.0,617.0 396.7,616.4 396.6,615.6 396.6,614.9 396.8,614.1 397.2,613.4 397.7,612.8 398.4,612.3 399.1,611.9 400.0,611.8 400.9,611.8 401.8,612.0 402.6,612.4 403.3,613.0 403.9,613.8 404.3,614.6 404.6,615.6 404.6,616.6 404.3,617.6 403.9,618.6 403.2,619.4 402.4,620.1 401.4,620.6 400.3,620.9 399.2,620.9 398.1,620.7 397.0,620.2 396.0,619.5 395.2,618.6 394.7,617.5" fill="none" stroke="#a8a8a8" stroke-width="1.3" stroke-linecap="round"/><path d="M16 646.25V655.25L10.5 650.75Z" fill="#c0c0c0"/><path d="M26.5 645.95L31 650.75L26.5 655.55L22 650.75Z" fill="#2d8ceb"/><path d="M38 646.25V655.25L43.5 650.75Z" fill="#c0c0c0"/><circle cx="121.5" cy="651.75" r="5" fill="none" stroke="#2d7fd6" stroke-width="1.5"/><path d="M119.5 644.75H123.5M121.5 651.75L119 648.75" stroke="#2d7fd6" stroke-width="1.5"/><path d="M133 645.75V655.75H144" stroke="#b0b0b0" stroke-width="1.2" fill="none"/><path d="M134.5 652.75L138 647.75L141 651.75L143.5 649.75" stroke="#b0b0b0" stroke-width="1.1" fill="none"/><polyline points="399.5,651.4 399.3,651.3 399.2,651.2 399.0,651.0 398.9,650.8 398.8,650.6 398.8,650.3 398.9,650.0 399.0,649.7 399.2,649.4 399.5,649.2 399.8,649.1 400.2,649.0 400.6,649.0 401.0,649.1 401.4,649.3 401.8,649.6 402.0,650.0 402.2,650.5 402.3,651.0 402.3,651.5 402.1,652.0 401.9,652.5 401.5,652.9 401.0,653.3 400.4,653.5 399.8,653.6 399.2,653.6 398.5,653.4 397.9,653.1 397.4,652.6 397.0,652.0 396.7,651.4 396.6,650.6 396.6,649.9 396.8,649.1 397.2,648.4 397.7,647.8 398.4,647.3 399.1,646.9 400.0,646.8 400.9,646.8 401.8,647.0 402.6,647.4 403.3,648.0 403.9,648.8 404.3,649.6 404.6,650.6 404.6,651.6 404.3,652.6 403.9,653.6 403.2,654.4 402.4,655.1 401.4,655.6 400.3,655.9 399.2,655.9 398.1,655.7 397.0,655.2 396.0,654.5 395.2,653.6 394.7,652.5" fill="none" stroke="#a8a8a8" stroke-width="1.3" stroke-linecap="round"/><path d="M16 681.25V690.25L10.5 685.75Z" fill="#c0c0c0"/><path d="M26.5 680.95L31 685.75L26.5 690.55L22 685.75Z" fill="#2d8ceb"/><path d="M38 681.25V690.25L43.5 685.75Z" fill="#c0c0c0"/><circle cx="121.5" cy="686.75" r="5" fill="none" stroke="#2d7fd6" stroke-width="1.5"/><path d="M119.5 679.75H123.5M121.5 686.75L119 683.75" stroke="#2d7fd6" stroke-width="1.5"/><path d="M133 680.75V690.75H144" stroke="#b0b0b0" stroke-width="1.2" fill="none"/><path d="M134.5 687.75L138 682.75L141 686.75L143.5 684.75" stroke="#b0b0b0" stroke-width="1.1" fill="none"/><polyline points="399.5,686.4 399.3,686.3 399.2,686.2 399.0,686.0 398.9,685.8 398.8,685.6 398.8,685.3 398.9,685.0 399.0,684.7 399.2,684.4 399.5,684.2 399.8,684.1 400.2,684.0 400.6,684.0 401.0,684.1 401.4,684.3 401.8,684.6 402.0,685.0 402.2,685.5 402.3,686.0 402.3,686.5 402.1,687.0 401.9,687.5 401.5,687.9 401.0,688.3 400.4,688.5 399.8,688.6 399.2,688.6 398.5,688.4 397.9,688.1 397.4,687.6 397.0,687.0 396.7,686.4 396.6,685.6 396.6,684.9 396.8,684.1 397.2,683.4 397.7,682.8 398.4,682.3 399.1,681.9 400.0,681.8 400.9,681.8 401.8,682.0 402.6,682.4 403.3,683.0 403.9,683.8 404.3,684.6 404.6,685.6 404.6,686.6 404.3,687.6 403.9,688.6 403.2,689.4 402.4,690.1 401.4,690.6 400.3,690.9 399.2,690.9 398.1,690.7 397.0,690.2 396.0,689.5 395.2,688.6 394.7,687.5" fill="none" stroke="#a8a8a8" stroke-width="1.3" stroke-linecap="round"/><rect x="3" y="702" width="412" height="18" fill="#232323"/><rect x="3" y="702" width="412" height="1.2" fill="#161616"/><rect x="9" y="706" width="7" height="7" fill="none" stroke="#2d7fd6" stroke-width="1.3"/><rect x="12.5" y="709.5" width="7" height="7" fill="#232323" stroke="#2d7fd6" stroke-width="1.3"/><circle cx="31" cy="710" r="3.8" fill="none" stroke="#b0b0b0" stroke-width="1.3"/><rect x="31.5" y="710.5" width="6" height="6" fill="#232323" stroke="#b0b0b0" stroke-width="1.3"/><path d="M47 706C45 709 45 713 47 716M53 706C55 709 55 713 53 716M49 705.5H51V716.5H49Z" stroke="#b0b0b0" stroke-width="1.3" fill="#808080"/><path d="M63 716V712C63 708 71 708 71 712V716Z" fill="#b0b0b0"/><circle cx="67" cy="708" r="2.8" fill="#b0b0b0"/><path d="M72 709L75 712L72 715" stroke="#808080" stroke-width="1.2" fill="none"/><rect x="249.5" y="704.5" width="127" height="15" fill="none" stroke="#383838" stroke-width="1"/></svg>
<div class="t" style="left:47px;top:460.5px;font-size:12px;line-height:14px;color:#3a3a3a;transform:scaleX(0.831);transform-origin:0 50%;">ImanVFX-01</div>
<div class="t" style="left:41px;top:485.0px;font-size:14px;line-height:16px;color:#3b8eea;font-weight:bold;transform:scaleX(1.053);transform-origin:0 50%;">00060</div>
<div class="t" style="left:11px;top:502.5px;font-size:10px;line-height:12px;color:#274f82;">0:00:02:00 (29.97 fps)</div>
<div class="t" style="left:101px;top:522.5px;font-size:10px;line-height:12px;color:#909090;transform:scaleX(0.719);transform-origin:0 50%;">#</div>
<div class="t" style="left:132px;top:522.0px;font-size:11px;line-height:13px;color:#b4b4b4;transform:scaleX(0.766);transform-origin:0 50%;">Source Name</div>
<div class="t" style="left:296px;top:521.0px;font-size:12px;line-height:14px;color:#b8b8b8;transform:scaleX(1.071);transform-origin:0 50%;font-style:italic;font-family:'Liberation Serif',serif;">fx</div>
<div class="t" style="left:383px;top:522.0px;font-size:11px;line-height:13px;color:#a8a8a8;transform:scaleX(0.724);transform-origin:0 50%;">Parent &amp;</div>
<div class="t" style="left:102px;top:538.8px;font-size:12px;line-height:14px;color:#b8b8b8;">1</div>
<div class="t" style="left:148px;top:539.2px;font-size:12px;line-height:14px;color:#c4c4c4;transform:scaleX(0.929);transform-origin:0 50%;">Color.jpg</div>
<div class="t" style="left:405px;top:539.2px;font-size:12px;line-height:14px;color:#b0b0b0;">No</div>
<div class="t" style="left:102px;top:556.2px;font-size:12px;line-height:14px;color:#b8b8b8;">2</div>
<div class="t" style="left:148px;top:556.8px;font-size:12px;line-height:14px;color:#c4c4c4;transform:scaleX(0.865);transform-origin:0 50%;">Shape Layer 7</div>
<div class="t" style="left:405px;top:556.8px;font-size:12px;line-height:14px;color:#b0b0b0;">No</div>
<div class="t" style="left:102px;top:591.2px;font-size:12px;line-height:14px;color:#b8b8b8;">3</div>
<div class="t" style="left:148px;top:591.8px;font-size:12px;line-height:14px;color:#c4c4c4;transform:scaleX(0.865);transform-origin:0 50%;">Shape Layer 6</div>
<div class="t" style="left:405px;top:591.8px;font-size:12px;line-height:14px;color:#b0b0b0;">No</div>
<div class="t" style="left:102px;top:626.2px;font-size:12px;line-height:14px;color:#b8b8b8;">4</div>
<div class="t" style="left:148px;top:626.8px;font-size:12px;line-height:14px;color:#1c1c1c;transform:scaleX(0.865);transform-origin:0 50%;">Shape Layer 5</div>
<div class="t" style="left:405px;top:626.8px;font-size:12px;line-height:14px;color:#b0b0b0;">No</div>
<div class="t" style="left:102px;top:661.2px;font-size:12px;line-height:14px;color:#b8b8b8;">5</div>
<div class="t" style="left:148px;top:661.8px;font-size:12px;line-height:14px;color:#c4c4c4;transform:scaleX(0.865);transform-origin:0 50%;">Shape Layer 4</div>
<div class="t" style="left:405px;top:661.8px;font-size:12px;line-height:14px;color:#b0b0b0;">No</div>
<div class="t" style="left:102px;top:696.2px;font-size:12px;line-height:14px;color:#b8b8b8;">6</div>
<div class="t" style="left:148px;top:696.8px;font-size:12px;line-height:14px;color:#c4c4c4;transform:scaleX(0.865);transform-origin:0 50%;">Shape Layer 3</div>
<div class="t" style="left:405px;top:696.8px;font-size:12px;line-height:14px;color:#b0b0b0;">No</div>
<div class="t" style="left:152px;top:574.2px;font-size:12px;line-height:14px;color:#b4b4b4;transform:scaleX(0.878);transform-origin:0 50%;">Position</div>
<div class="t" style="left:254px;top:573.2px;font-size:12px;line-height:14px;color:#2d7fd6;transform:scaleX(0.828);transform-origin:0 50%;">1302.0,364.0</div>
<div class="t" style="left:152px;top:609.2px;font-size:12px;line-height:14px;color:#b4b4b4;transform:scaleX(0.878);transform-origin:0 50%;">Position</div>
<div class="t" style="left:254px;top:608.2px;font-size:12px;line-height:14px;color:#2d7fd6;transform:scaleX(0.828);transform-origin:0 50%;">1086.0,364.0</div>
<div class="t" style="left:152px;top:644.2px;font-size:12px;line-height:14px;color:#b4b4b4;transform:scaleX(0.878);transform-origin:0 50%;">Position</div>
<div class="t" style="left:254px;top:643.2px;font-size:12px;line-height:14px;color:#2d7fd6;transform:scaleX(0.820);transform-origin:0 50%;">867.0,364.0</div>
<div class="t" style="left:152px;top:679.2px;font-size:12px;line-height:14px;color:#b4b4b4;transform:scaleX(0.878);transform-origin:0 50%;">Position</div>
<div class="t" style="left:254px;top:678.2px;font-size:12px;line-height:14px;color:#2d7fd6;transform:scaleX(0.820);transform-origin:0 50%;">649.0,364.0</div>
<div class="abs" style="left:3px;top:702.5px;width:412px;height:17.5px;background:#232323;border-top:1.2px solid #161616"></div>
<svg class="abs" style="left:0px;top:700px;" width="420" height="20" viewBox="0 700 420 20"><rect x="9" y="706" width="7" height="7" fill="none" stroke="#2d7fd6" stroke-width="1.3"/><rect x="12.5" y="709.5" width="7" height="7" fill="#232323" stroke="#2d7fd6" stroke-width="1.3"/><circle cx="31" cy="710" r="3.8" fill="none" stroke="#b0b0b0" stroke-width="1.3"/><rect x="31.5" y="710.5" width="6" height="6" fill="#232323" stroke="#b0b0b0" stroke-width="1.3"/><path d="M47 706C45 709 45 713 47 716M53 706C55 709 55 713 53 716M49 705.5H51V716.5H49Z" stroke="#b0b0b0" stroke-width="1.3" fill="#808080"/><path d="M63 716V712C63 708 71 708 71 712V716Z" fill="#b0b0b0"/><circle cx="67" cy="708" r="2.8" fill="#b0b0b0"/><path d="M72 709L75 712L72 715" stroke="#808080" stroke-width="1.2" fill="none"/><rect x="249.5" y="704.5" width="127" height="15" fill="none" stroke="#383838" stroke-width="1"/></svg>
<div class="t" style="left:83px;top:704.5px;font-size:12px;line-height:14px;color:#b0b0b0;transform:scaleX(0.854);transform-origin:0 50%;">Frame Render Time:</div>
<div class="t" style="left:183px;top:704.5px;font-size:12px;line-height:14px;color:#2fc878;transform:scaleX(0.852);transform-origin:0 50%;">20ms</div>
<div class="t" style="left:256px;top:704.5px;font-size:12px;line-height:14px;color:#a8a8a8;transform:scaleX(0.866);transform-origin:0 50%;">Toggle Switches / Modes</div>
<svg class="abs" style="left:890px;top:480px;" width="390" height="240" viewBox="890 480 390 240"><rect x="897" y="486" width="380" height="234" fill="#232323"/><rect x="897" y="488" width="360" height="8.5" fill="#5e5e5e"/><rect x="1257" y="488" width="6" height="8.5" rx="2" fill="#2d8ceb"/><rect x="957" y="511" width="1" height="5" fill="#9a9a9a"/><rect x="1032" y="511" width="1" height="5" fill="#9a9a9a"/><rect x="1107" y="511" width="1" height="5" fill="#9a9a9a"/><rect x="1182" y="511" width="1" height="5" fill="#9a9a9a"/><rect x="1257" y="511" width="1" height="5" fill="#9a9a9a"/><rect x="897" y="517.5" width="360" height="15" fill="#6b6b6b"/><rect x="1254" y="517.5" width="8" height="15" rx="2.5" fill="#2d8ceb"/><rect x="897" y="532.5" width="380" height="5" fill="#1b1b1b"/><path d="M1266.5 520H1277.5V529L1272 535.5L1266.5 529Z" fill="#c8c8c8"/><rect x="897" y="537.0" width="367" height="17.5" fill="#232323"/><rect x="897" y="554.5" width="367" height="17.5" fill="#232323"/><rect x="897" y="572.0" width="367" height="17.5" fill="#2c2c2c"/><rect x="897" y="589.5" width="367" height="17.5" fill="#232323"/><rect x="897" y="607.0" width="367" height="17.5" fill="#2c2c2c"/><rect x="897" y="624.5" width="367" height="17.5" fill="#232323"/><rect x="897" y="642.0" width="367" height="17.5" fill="#2c2c2c"/><rect x="897" y="659.5" width="367" height="17.5" fill="#232323"/><rect x="897" y="677.0" width="367" height="17.5" fill="#2c2c2c"/><rect x="897" y="694.5" width="367" height="17.5" fill="#232323"/><rect x="897" y="537.5" width="359" height="16.0" fill="#7f7c94"/><rect x="897" y="555.0" width="359" height="16.0" fill="#5a63a2"/><rect x="897" y="590.0" width="359" height="16.0" fill="#5a63a2"/><rect x="897" y="625.0" width="359" height="16.0" fill="#5868d6"/><rect x="897" y="625.0" width="359" height="2" fill="#7f8cf0"/><rect x="1256" y="625.0" width="8" height="16.0" fill="#4a4a4a"/><rect x="897" y="660.0" width="359" height="16.0" fill="#5a63a2"/><rect x="897" y="695.0" width="359" height="16.0" fill="#5a63a2"/><rect x="1256" y="537.5" width="8" height="183" fill="#3a3a3a" opacity="0.55"/><rect x="897" y="702.5" width="380" height="18" fill="#232323"/><rect x="897" y="701.5" width="380" height="1.2" fill="#181818"/><rect x="1264" y="486" width="13" height="234" fill="#202020"/><path d="M1266.5 520H1277.5V529L1272 535.5L1266.5 529Z" fill="#c8c8c8"/><path d="M1266 548L1271 542.5V553.5Z" fill="none" stroke="#c8c8c8" stroke-width="1.2"/><rect x="1271" y="544" width="6" height="6" fill="#c8c8c8"/></svg>
<div class="t" style="left:943.5px;top:497.0px;font-size:11px;line-height:13px;color:#c0c0c0;transform:scaleX(0.883);transform-origin:0 50%;">00300</div>
<div class="t" style="left:1018.5px;top:497.0px;font-size:11px;line-height:13px;color:#c0c0c0;transform:scaleX(0.883);transform-origin:0 50%;">00350</div>
<div class="t" style="left:1093.5px;top:497.0px;font-size:11px;line-height:13px;color:#c0c0c0;transform:scaleX(0.883);transform-origin:0 50%;">00400</div>
<div class="t" style="left:1168.5px;top:497.0px;font-size:11px;line-height:13px;color:#c0c0c0;transform:scaleX(0.883);transform-origin:0 50%;">00450</div>
<div class="abs" style="left:1244px;top:496px;width:19px;height:14px;overflow:hidden"><div class="t" style="left:0;top:0.5px;font-size:11px;line-height:13px;color:#c0c0c0;transform:scaleX(0.89);transform-origin:0 50%">00500</div></div>
<div class="t" style="left:1006px;top:644.5px;font-size:19px;line-height:21px;color:rgba(225,225,232,0.5);transform:scaleX(0.980);transform-origin:0 50%;">Activate Windows</div>
<div class="t" style="left:1006px;top:670.0px;font-size:14px;line-height:16px;color:rgba(225,225,232,0.5);">Go to Settings to activate Windows.</div>
<div class="abs" style="left:415px;top:388px;width:482px;height:342px;background:#262626;box-shadow:0 1px 9px rgba(0,0,0,0.45),0 0 0 1px rgba(70,70,70,0.55)"></div>
<div class="abs" style="left:415px;top:388.5px;width:482px;height:30.80000000000001px;background:#ffffff;"></div>
<div class="t" style="left:423px;top:396.5px;font-size:12px;line-height:14px;color:#000;transform:scaleX(0.896);transform-origin:0 50%;">Shape Fill Color</div>
<svg class="abs" style="left:877px;top:397px;" width="11" height="11" viewBox="0 0 11 11"><path d="M0.5 0.5L10.5 10.5M10.5 0.5L0.5 10.5" stroke="#111" stroke-width="1.2" fill="none"/></svg>
<div class="abs" style="left:432px;top:437.5px;width:240px;height:261.5px;background:#000;background:linear-gradient(to bottom,rgba(0,0,0,0),rgba(0,0,0,0.56) 50%,#000),linear-gradient(to right,#ffc7c7,#ffffc7 16.67%,#c7ffc7 33.33%,#c7ffff 50%,#c7c7ff 66.67%,#ffc7ff 83.33%,#ffc7c7)"></div>
<svg class="abs" style="left:614px;top:470px;" width="11" height="11" viewBox="0 0 11 11"><circle cx="5.5" cy="5.5" r="4.2" fill="none" stroke="#3a2a44" stroke-width="1.3"/></svg>
<div class="abs" style="left:684.5px;top:437.5px;width:18.0px;height:261.5px;background:#000;background:linear-gradient(to bottom,#a000dc,#d9d4dc)"></div>
<div class="t" style="left:677px;top:635.5px;font-size:11px;line-height:13px;color:#9a9a9a;">›</div>
<div class="t" style="left:705px;top:635.5px;font-size:11px;line-height:13px;color:#9a9a9a;">‹</div>
<div class="abs" style="left:717px;top:437.5px;width:56px;height:34.5px;background:#ccabda;"></div>
<div class="abs" style="left:717px;top:472px;width:56px;height:35.5px;background:#5b00b4;"></div>
<div class="abs" style="left:801px;top:432px;width:85px;height:20.5px;border:1.5px solid #b0b0b0;border-radius:10px"></div>
<div class="t" style="left:836px;top:435.0px;font-size:12px;line-height:14px;color:#e0e0e0;transform:scaleX(0.807);transform-origin:0 50%;">OK</div>
<div class="abs" style="left:801px;top:462.5px;width:85px;height:20.5px;border:1.5px solid #5e5e5e;border-radius:10px"></div>
<div class="t" style="left:828px;top:465.5px;font-size:12px;line-height:14px;color:#8c8c8c;transform:scaleX(0.803);transform-origin:0 50%;">Cancel</div>
<svg class="abs" style="left:717.5px;top:521.5px;" width="12" height="12" viewBox="0 0 12 12"><circle cx="6" cy="6" r="4.6" fill="none" stroke="#a8a8a8" stroke-width="1.6"/></svg>
<div class="t" style="left:734px;top:522.0px;font-size:11px;line-height:13px;color:#a0a0a0;transform:scaleX(0.818);transform-origin:0 50%;">H:</div>
<div class="t" style="left:745.3px;top:519.8px;font-size:11.5px;line-height:13.5px;color:#3b8eea;transform:scaleX(0.844);transform-origin:0 50%;">282</div>
<div class="t" style="left:765.5px;top:521.0px;font-size:9px;line-height:11px;color:#8a8a8a;">°</div>
<svg class="abs" style="left:717.5px;top:545px;" width="12" height="12" viewBox="0 0 12 12"><circle cx="6" cy="6" r="5" fill="#9a9a9a"/></svg>
<div class="t" style="left:734px;top:545.5px;font-size:11px;line-height:13px;color:#a0a0a0;transform:scaleX(0.866);transform-origin:0 50%;">S:</div>
<div class="t" style="left:745.3px;top:543.2px;font-size:11.5px;line-height:13.5px;color:#3b8eea;transform:scaleX(0.837);transform-origin:0 50%;">22</div>
<div class="t" style="left:760px;top:544.8px;font-size:10.5px;line-height:12.5px;color:#a0a0a0;transform:scaleX(0.857);transform-origin:0 50%;">%</div>
<svg class="abs" style="left:717.5px;top:568.5px;" width="12" height="12" viewBox="0 0 12 12"><circle cx="6" cy="6" r="4.6" fill="none" stroke="#a8a8a8" stroke-width="1.6"/></svg>
<div class="t" style="left:734px;top:569.0px;font-size:11px;line-height:13px;color:#a0a0a0;transform:scaleX(0.866);transform-origin:0 50%;">B:</div>
<div class="t" style="left:745.3px;top:566.8px;font-size:11.5px;line-height:13.5px;color:#3b8eea;transform:scaleX(0.837);transform-origin:0 50%;">85</div>
<div class="t" style="left:760px;top:568.2px;font-size:10.5px;line-height:12.5px;color:#a0a0a0;transform:scaleX(0.857);transform-origin:0 50%;">%</div>
<svg class="abs" style="left:717.5px;top:598px;" width="12" height="12" viewBox="0 0 12 12"><circle cx="6" cy="6" r="4.6" fill="none" stroke="#a8a8a8" stroke-width="1.6"/></svg>
<div class="t" style="left:734px;top:598.5px;font-size:11px;line-height:13px;color:#a0a0a0;transform:scaleX(0.818);transform-origin:0 50%;">R:</div>
<div class="t" style="left:745.3px;top:596.2px;font-size:11.5px;line-height:13.5px;color:#3b8eea;transform:scaleX(0.844);transform-origin:0 50%;">204</div>
<svg class="abs" style="left:717.5px;top:621px;" width="12" height="12" viewBox="0 0 12 12"><circle cx="6" cy="6" r="4.6" fill="none" stroke="#a8a8a8" stroke-width="1.6"/></svg>
<div class="t" style="left:734px;top:621.5px;font-size:11px;line-height:13px;color:#a0a0a0;transform:scaleX(0.775);transform-origin:0 50%;">G:</div>
<div class="t" style="left:745.3px;top:619.2px;font-size:11.5px;line-height:13.5px;color:#3b8eea;transform:scaleX(0.797);transform-origin:0 50%;">171</div>
<svg class="abs" style="left:717.5px;top:644.5px;" width="12" height="12" viewBox="0 0 12 12"><circle cx="6" cy="6" r="4.6" fill="none" stroke="#a8a8a8" stroke-width="1.6"/></svg>
<div class="t" style="left:734px;top:645.0px;font-size:11px;line-height:13px;color:#a0a0a0;transform:scaleX(0.866);transform-origin:0 50%;">B:</div>
<div class="t" style="left:745.3px;top:642.8px;font-size:11.5px;line-height:13.5px;color:#3b8eea;transform:scaleX(0.844);transform-origin:0 50%;">218</div>
<div class="t" style="left:713px;top:674.0px;font-size:10px;line-height:12px;color:#a0a0a0;">#</div>
<div class="abs" style="left:721px;top:671px;width:56px;height:18.5px;background:#1d1d1d;border:1px solid #323232"></div>
<div class="t" style="left:726px;top:673.0px;font-size:12px;line-height:14px;color:#d6d6d6;transform:scaleX(0.820);transform-origin:0 50%;">CCABDA</div>
<div class="abs" style="left:800px;top:530.5px;width:23px;height:23.5px;background:#303030;border-radius:2px"></div>
<svg class="abs" style="left:803px;top:533px;" width="17" height="17" viewBox="0 0 17 17"><g transform="translate(2.5,15.5)"><path d="M0.5 -0.5 L1.5 -4 L8 -10.5 L10.5 -8 L4 -1.5 Z" fill="none" stroke="#e8e8e8" stroke-width="1.3" stroke-linejoin="round"/><path d="M6.5 -11.5 L11.5 -6.5 L12.5 -7.5 L12 -8.5 C14.5 -11 14 -13 13 -14 C12 -15 10 -15.5 7.5 -13 L6.5 -13.5 Z" fill="#e8e8e8"/></g></svg>
<div class="abs" style="left:801px;top:564px;width:13px;height:14px;background:#a6a6a6;border-radius:2px"></div>
<svg class="abs" style="left:801px;top:564px;" width="13" height="14" viewBox="0 0 13 14"><path d="M3 7.2L5.6 10L10.2 3.6" fill="none" stroke="#262626" stroke-width="1.8"/></svg>
<div class="t" style="left:818px;top:564.0px;font-size:12px;line-height:14px;color:#9a9a9a;transform:scaleX(0.890);transform-origin:0 50%;">Preview</div>
<div class="abs" style="left:415px;top:714.5px;width:482px;height:5.5px;background:#2a2a2a;"></div>
<div class="abs" style="left:529px;top:716.5px;width:5px;height:1.5px;background:#3a3a3a;"></div>
</body>
</html>
